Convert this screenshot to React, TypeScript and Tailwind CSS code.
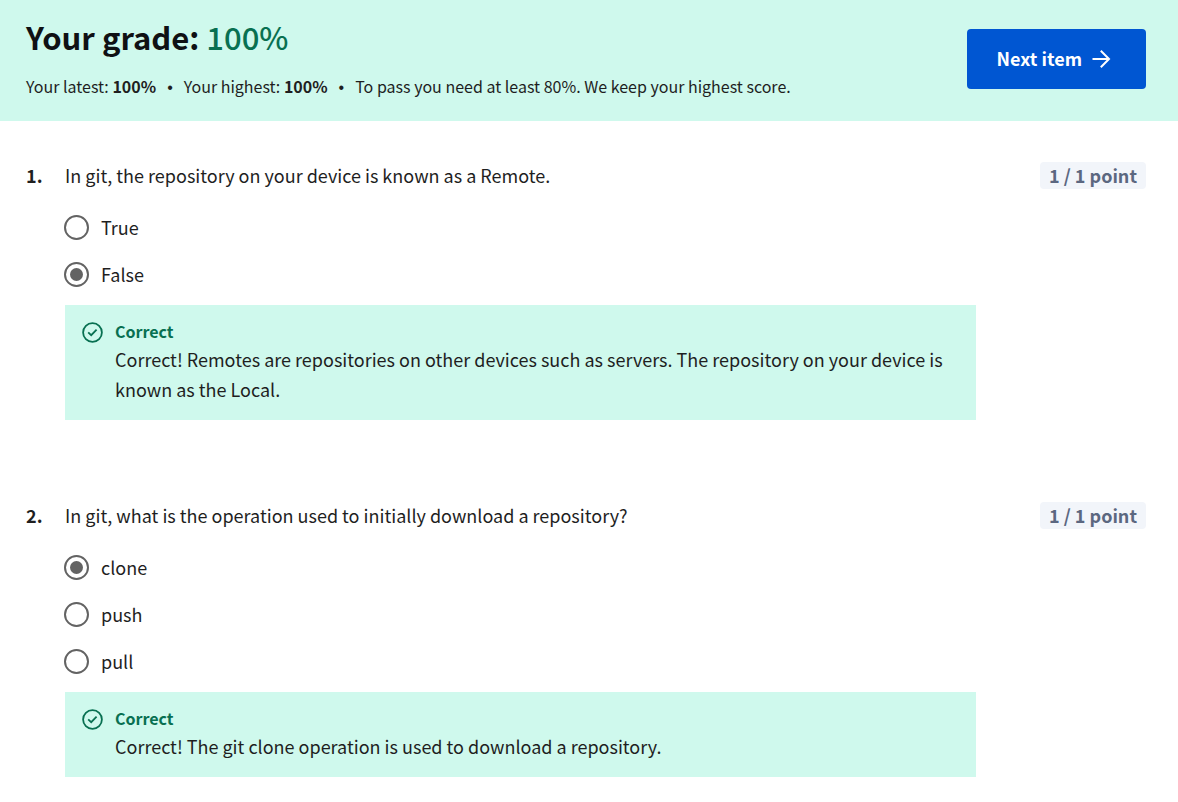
import { useState } from 'react';

type Question = {
  id: number;
  prompt: string;
  options: string[];
  answer: string;
  feedback: string;
};

const questions: Question[] = [
  {
    id: 1,
    prompt: 'In git, the repository on your device is known as a Remote.',
    options: ['True', 'False'],
    answer: 'False',
    feedback:
      'Correct! Remotes are repositories on other devices such as servers. The repository on your device is known as the Local.',
  },
  {
    id: 2,
    prompt: 'In git, what is the operation used to initially download a repository?',
    options: ['clone', 'push', 'pull'],
    answer: 'clone',
    feedback: 'Correct! The git clone operation is used to download a repository.',
  },
];

function ArrowIcon() {
  return (
    <svg className="size-5" viewBox="0 0 20 20" fill="none" stroke="currentColor" strokeWidth="2" aria-hidden="true">
      <path d="M1.5 10H17.5M9.8 1.8L18 10L9.8 18.2" />
    </svg>
  );
}

function CheckIcon() {
  return (
    <svg className="size-[21px] shrink-0" viewBox="0 0 21 21" fill="none" stroke="currentColor" aria-hidden="true">
      <circle cx="10.5" cy="10.5" r="9.4" strokeWidth="1.8" />
      <path d="M6.2 10.4L9.2 13.2L14.6 7.7" strokeWidth="1.8" />
    </svg>
  );
}

function Bullet() {
  return <span className="mx-[11px] font-['Liberation_Sans',sans-serif]">•</span>;
}

function Header() {
  return (
    <header className="flex items-start justify-between bg-[#cff9ed] pt-3.5 pr-8 pb-5 pl-[26px]">
      <div>
        <h1 className="text-[31px] leading-[46px] font-bold text-[#0f1114]">
          Your grade: <span className="font-medium text-[#087051]">100%</span>
        </h1>
        <p className="mt-[13px] text-base leading-[26px]">
          Your latest: <b>100%</b>
          <Bullet />
          Your highest: <b>100%</b>
          <Bullet />
          To pass you need at least 80%. We keep your highest score.
        </p>
      </div>
      <button
        type="button"
        className="mt-[15px] flex h-[60px] shrink-0 items-center gap-[9px] rounded bg-[#0056d2] pr-[35px] pl-[30px] text-lg font-bold text-white"
      >
        <span className="pb-0.5">Next item</span>
        <ArrowIcon />
      </button>
    </header>
  );
}

function QuestionItem({ question }: { question: Question }) {
  const [selected, setSelected] = useState(question.answer);
  return (
    <section className="flex text-lg">
      <span className="w-[39px] shrink-0 leading-[26px] font-bold">{question.id}.</span>
      <div className="min-w-0 flex-1">
        <fieldset>
          <legend className="leading-[26px]">{question.prompt}</legend>
          <div className="mt-4">
            {question.options.map((option) => (
              <label key={option} className="-ml-px flex h-[47px] items-center gap-3">
                <input
                  type="radio"
                  name={`question-${question.id}`}
                  checked={selected === option}
                  onChange={() => setSelected(option)}
                  className="grid size-[25px] appearance-none place-items-center rounded-full border-2 border-[#636363] before:size-[13px] before:rounded-full checked:before:bg-[#636363]"
                />
                <span className="pb-0.5">{option}</span>
              </label>
            ))}
          </div>
        </fieldset>
        <div className="mt-[7px] bg-[#cff9ed] pt-[15px] pr-6 pb-4 pl-[17px]">
          <div className="flex h-6 items-center gap-3 text-base leading-6 font-bold text-[#087051]">
            <CheckIcon />
            <span className="pb-0.5">Correct</span>
          </div>
          <p className="pl-[33px] leading-[30px]">{question.feedback}</p>
        </div>
      </div>
      <div className="ml-16 h-[27px] shrink-0 self-start rounded bg-[#f2f5fa] px-[9px] leading-[26px] font-bold text-[#5b6780]">
        1 / 1 point
      </div>
    </section>
  );
}

export default function App() {
  return (
    <div className="bg-white font-['Noto_Sans_CJK_SC','Noto_Sans',sans-serif] text-[#1f1f1f]">
      <Header />
      <main className="flex flex-col gap-[82px] pt-[41px] pr-8 pb-6 pl-[26px]">
        {questions.map((question) => (
          <QuestionItem key={question.id} question={question} />
        ))}
      </main>
    </div>
  );
}
